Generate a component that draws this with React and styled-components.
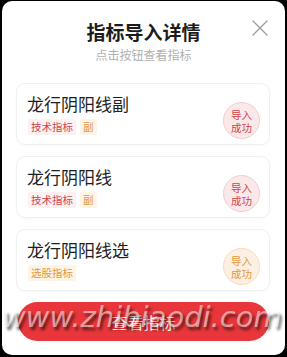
import React from 'react';
import styled, { createGlobalStyle } from 'styled-components';

const GlobalStyle = createGlobalStyle`
  html, body {
    margin: 0;
    padding: 0;
    background: #000;
  }
  body {
    font-family: 'Noto Sans CJK SC', 'Noto Sans', sans-serif;
  }
`;

const items = [
  { name: '龙行阴阳线副', tags: [{ text: '技术指标', tone: 'red' }, { text: '副', tone: 'orange' }], tone: 'red' },
  { name: '龙行阴阳线', tags: [{ text: '技术指标', tone: 'red' }, { text: '副', tone: 'orange' }], tone: 'red' },
  { name: '龙行阴阳线选', tags: [{ text: '选股指标', tone: 'orange' }], tone: 'orange' },
];

const tones = {
  red: { fg: '#d2434b', bg: '#fdf0f0', badge: '#fbe9ea', ring: '#f1cdd0' },
  orange: { fg: '#e3963f', bg: '#fdf4e6', badge: '#fcf0e2', ring: '#f3dcc0' },
};

function CloseIcon() {
  return (
    <svg width='16' height='16' viewBox='0 0 16 16' fill='none' stroke='#9a9a9a' strokeWidth='1.3' strokeLinecap='round'>
      <path d='M1 1 15 15M15 1 1 15' />
    </svg>
  );
}

export default function App() {
  return (
    <>
      <GlobalStyle />
      <Modal>
        <Header>
          <Title>指标导入详情</Title>
          <Subtitle>点击按钮查看指标</Subtitle>
          <CloseButton>
            <CloseIcon />
          </CloseButton>
        </Header>
        <List>
          {items.map((item) => (
            <Card key={item.name}>
              <CardBody>
                <CardTitle>{item.name}</CardTitle>
                <TagRow>
                  {item.tags.map((tag) => (
                    <Tag key={tag.text} $tone={tag.tone}>
                      {tag.text}
                    </Tag>
                  ))}
                </TagRow>
              </CardBody>
              <Badge $tone={item.tone}>
                <span>导入</span>
                <span>成功</span>
              </Badge>
            </Card>
          ))}
        </List>
        <ViewButton>查看指标</ViewButton>
        <Watermark>www.zhibiaodi.com</Watermark>
      </Modal>
    </>
  );
}

const Modal = styled.div`
  position: relative;
  margin: 1px 2px 0 2px;
  height: 354px;
  background: #fff;
  border-radius: 10px;
  overflow: hidden;
  display: flex;
  flex-direction: column;
`;

const Header = styled.div`
  position: relative;
  padding-top: 19px;
  display: flex;
  flex-direction: column;
  align-items: center;
`;

const Title = styled.div`
  font-size: 19px;
  line-height: 24px;
  font-weight: 700;
  color: #1c1c1c;
`;

const Subtitle = styled.div`
  margin-top: 3px;
  font-size: 12px;
  line-height: 16px;
  color: #b0b0b0;
`;

const CloseButton = styled.div`
  position: absolute;
  top: 19px;
  right: 17px;
  display: flex;
`;

const List = styled.div`
  margin-top: 20px;
  padding: 0 15px 0 14px;
  display: flex;
  flex-direction: column;
  gap: 11px;
`;

const Card = styled.div`
  height: 62px;
  box-sizing: border-box;
  border: 1px solid #f0f0f0;
  border-radius: 9px;
  box-shadow: 0 1px 3px rgba(0, 0, 0, 0.03);
  display: flex;
  padding: 0 9px 0 10px;
`;

const CardBody = styled.div`
  flex: 1;
  padding-top: 9px;
  display: flex;
  flex-direction: column;
  gap: 4px;
`;

const CardTitle = styled.div`
  font-size: 17px;
  line-height: 22px;
  color: #1e1e1e;
`;

const TagRow = styled.div`
  display: flex;
  gap: 4px;
  padding-left: 1px;
`;

const Tag = styled.span`
  font-size: 10.5px;
  line-height: 16px;
  padding: 0 3px;
  border-radius: 2px;
  color: ${(p) => tones[p.$tone].fg};
  background: ${(p) => tones[p.$tone].bg};
`;

const Badge = styled.div`
  align-self: flex-start;
  margin-top: 18px;
  width: 37px;
  height: 37px;
  box-sizing: border-box;
  border-radius: 50%;
  border: 1px solid ${(p) => tones[p.$tone].ring};
  background: ${(p) => tones[p.$tone].badge};
  color: ${(p) => tones[p.$tone].fg};
  font-size: 10.5px;
  line-height: 13px;
  display: flex;
  flex-direction: column;
  align-items: center;
  justify-content: center;
`;

const ViewButton = styled.div`
  margin: 11px 16px 0 16px;
  height: 39px;
  border-radius: 20px;
  background: #e8363a;
  color: #fff;
  font-size: 16px;
  display: flex;
  align-items: center;
  justify-content: center;
`;

const Watermark = styled.div`
  position: absolute;
  left: 0;
  top: 297px;
  font-family: 'DejaVu Sans', sans-serif;
  font-style: italic;
  font-size: 29px;
  line-height: 38px;
  white-space: nowrap;
  color: rgba(255, 255, 255, 0.55);
  text-shadow: 2px 3px 3px rgba(0, 0, 0, 0.6);
  pointer-events: none;
`;
